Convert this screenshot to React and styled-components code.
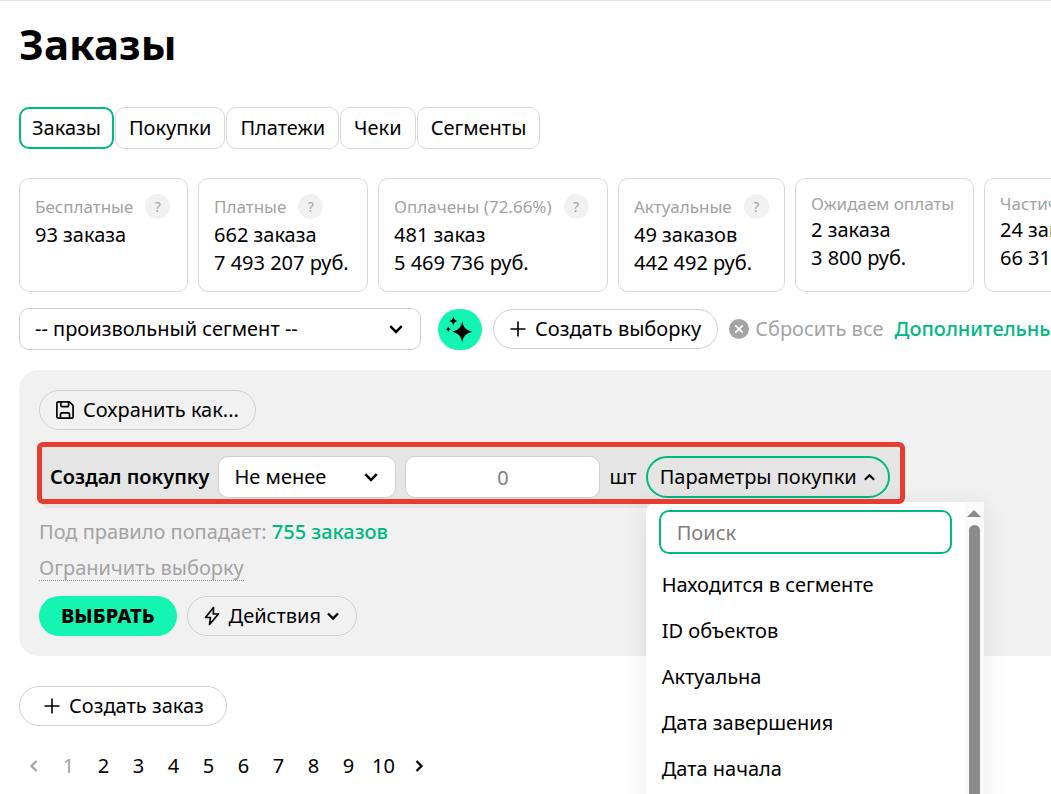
import styled, { createGlobalStyle } from "styled-components";

const tabs = ["Заказы", "Покупки", "Платежи", "Чеки", "Сегменты"];

const stats = [
  { label: "Бесплатные", help: true, lines: ["93 заказа"] },
  { label: "Платные", help: true, lines: ["662 заказа", "7 493 207 руб."] },
  { label: "Оплачены (72.66%)", help: true, lines: ["481 заказ", "5 469 736 руб."] },
  { label: "Актуальные", help: true, lines: ["49 заказов", "442 492 руб."] },
  { label: "Ожидаем оплаты", lines: ["2 заказа", "3 800 руб."] },
  { label: "Частично оплачены", lines: ["24 заказа", "66 316 руб."] },
];

const params = [
  "Находится в сегменте",
  "ID объектов",
  "Актуальна",
  "Дата завершения",
  "Дата начала",
];

const pages = [1, 2, 3, 4, 5, 6, 7, 8, 9, 10];

function Chevron({ direction = "down", size = 14, weight = 2 }) {
  const turn = { down: 0, left: 90, up: 180, right: 270 }[direction];
  return (
    <svg width={size} height={size} viewBox="0 0 14 14" fill="none" aria-hidden="true">
      <path
        d="M2 4.5 7 9.5l5-5"
        stroke="currentColor"
        strokeWidth={weight}
        transform={`rotate(${turn} 7 7)`}
      />
    </svg>
  );
}

function Plus() {
  return (
    <svg width="16" height="16" viewBox="0 0 16 16" fill="none" aria-hidden="true">
      <path d="M8 .5v15M.5 8h15" stroke="currentColor" strokeWidth="1.6" />
    </svg>
  );
}

function Sparkles() {
  return (
    <svg width="44" height="41" viewBox="0 0 44 41" fill="currentColor" aria-hidden="true">
      <path d="M24.2 12.300c1.200 6.300 3.700 8.800 10 10.500-6.300 1.700-8.800 4.200-10 10.500-1.200-6.300-3.700-8.800-10-10.500 6.300-1.700 8.800-4.200 10-10.500Z" />
      <path d="M15.300 7.500c.6 2.700 1.700 3.800 4.200 4.500-2.500.7-3.600 1.800-4.200 4.500-.6-2.700-1.700-3.800-4.200-4.500 2.500-.7 3.600-1.800 4.200-4.500Z" />
      <path d="M10.200 17.500c.4 1.600 1.100 2.300 2.600 2.700-1.500.4-2.200 1.100-2.600 2.700-.4-1.600-1.100-2.300-2.600-2.700 1.500-.4 2.200-1.100 2.600-2.700Z" />
    </svg>
  );
}

function Cross() {
  return (
    <svg width="20" height="20" viewBox="0 0 20 20" aria-hidden="true">
      <circle cx="10" cy="10" r="10" fill="#a3a3a3" />
      <path d="m6.300 6.300 7.400 7.400m0-7.400-7.400 7.400" stroke="#fff" strokeWidth="1.800" />
    </svg>
  );
}

function Floppy() {
  return (
    <svg width="18" height="18" viewBox="0 0 18 18" fill="none" aria-hidden="true">
      <g stroke="currentColor" strokeWidth="1.700" strokeLinejoin="round">
        <path d="M2.300.9h10.400a2 2 0 0 1 1.400.6l2.400 2.400a2 2 0 0 1 .6 1.400v10.400a1.400 1.400 0 0 1-1.400 1.400H2.300A1.400 1.400 0 0 1 .9 15.700V2.300A1.400 1.400 0 0 1 2.300.9Z" />
        <path d="M4.800.9v3.400a1.400 1.400 0 0 0 1.400 1.400h5a1.400 1.400 0 0 0 1.400-1.400V.9" />
        <path d="M4.500 17.100v-3.900a1.400 1.400 0 0 1 1.400-1.400h6.200a1.400 1.400 0 0 1 1.400 1.400v3.900" />
      </g>
    </svg>
  );
}

function Bolt() {
  return (
    <svg width="16" height="20" viewBox="0 0 16 20" fill="none" aria-hidden="true">
      <path
        d="M9.500 1.500 1.500 11.500h5l-1 7 9-10.500H9.300l.2-6.500Z"
        stroke="currentColor"
        strokeWidth="1.700"
        strokeLinejoin="round"
      />
    </svg>
  );
}

export default function App() {
  return (
    <Page>
      <GlobalStyle />
      <Title>Заказы</Title>

      <Tabs>
        {tabs.map((tab, i) => (
          <Tab key={tab} href="#" $active={i === 0}>
            {tab}
          </Tab>
        ))}
      </Tabs>

      <Stats>
        {stats.map((stat) => (
          <StatCard key={stat.label}>
            <StatLabel>
              {stat.label}
              {stat.help && <Help type="button">?</Help>}
            </StatLabel>
            {stat.lines.map((line) => (
              <StatValue key={line}>{line}</StatValue>
            ))}
          </StatCard>
        ))}
      </Stats>

      <SegmentBar>
        <SelectWrap $width={402}>
          <Select aria-label="Сегмент">
            <option>-- произвольный сегмент --</option>
          </Select>
          <Chevron size={16} weight={2.2} />
        </SelectWrap>
        <SparkButton type="button" aria-label="Подбор сегмента">
          <Sparkles />
        </SparkButton>
        <PillButton type="button">
          <Plus />
          Создать выборку
        </PillButton>
        <ResetButton type="button">
          <Cross />
          Сбросить все
        </ResetButton>
        <MoreLink href="#">Дополнительные</MoreLink>
      </SegmentBar>

      <FilterPanel>
        <PillButton type="button">
          <Floppy />
          Сохранить как...
        </PillButton>

        <RuleRow>
          <RuleName>Создал покупку</RuleName>
          <SelectWrap $width={178}>
            <Select aria-label="Условие">
              <option>Не менее</option>
            </Select>
            <Chevron size={16} weight={2.2} />
          </SelectWrap>
          <CountInput placeholder="0" aria-label="Количество" />
          <span>шт</span>
          <ParamsPicker>
            <ParamsButton type="button">
              Параметры покупки
              <Chevron direction="up" size={13} weight={2.2} />
            </ParamsButton>
            <Menu>
              <MenuBody>
                <SearchInput placeholder="Поиск" aria-label="Поиск" />
                {params.map((param) => (
                  <MenuItem key={param} type="button">
                    {param}
                  </MenuItem>
                ))}
              </MenuBody>
              <ScrollTrack>
                <ScrollArrow />
                <ScrollThumb />
              </ScrollTrack>
            </Menu>
          </ParamsPicker>
        </RuleRow>

        <Matches>
          Под правило попадает: <strong>755 заказов</strong>
        </Matches>
        <LimitLink href="#">Ограничить выборку</LimitLink>

        <PanelActions>
          <SubmitButton type="button">Выбрать</SubmitButton>
          <PillButton type="button">
            <Bolt />
            <DropLabel>
              Действия
              <Chevron size={14} weight={2.4} />
            </DropLabel>
          </PillButton>
        </PanelActions>
      </FilterPanel>

      <PillButton type="button" $wide>
        <Plus />
        Создать заказ
      </PillButton>

      <Pagination>
        <PageButton type="button" aria-label="Назад" disabled>
          <Chevron direction="left" weight={2.3} />
        </PageButton>
        {pages.map((page) => (
          <PageButton key={page} type="button" disabled={page === 1}>
            {page}
          </PageButton>
        ))}
        <PageButton type="button" aria-label="Вперёд">
          <Chevron direction="right" weight={2.3} />
        </PageButton>
      </Pagination>
    </Page>
  );
}

const GlobalStyle = createGlobalStyle`
  * {
    box-sizing: border-box;
  }
  body {
    margin: 0;
    background: #fff;
  }
  body, button, input, select {
    font-family: "Noto Sans", "Open Sans", sans-serif;
    font-size: 20px;
    line-height: 28px;
    color: #000;
  }
  button {
    cursor: pointer;
  }
  input::placeholder {
    color: #7d7d7d;
  }
  svg {
    flex: none;
  }
`;
const Page = styled.main`
  height: 100vh;
  overflow: hidden;
  padding: 15px 0 0 19px;
  border-top: 1px solid #e5e5e5;
`;
const Title = styled.h1`
  margin: 0 0 35px;
  font-size: 42px;
  line-height: 56px;
  font-weight: 700;
`;
const Tabs = styled.nav`
  display: flex;
  gap: 1px;
`;
const Tab = styled.a`
  height: 42px;
  padding: ${(props) => (props.$active ? "5px 11px" : "6px 13px")};
  border: ${(props) => (props.$active ? "2px solid #00b982" : "1px solid #d9d9d9")};
  border-radius: 10px;
  color: #000;
  text-decoration: none;
`;
const Stats = styled.section`
  display: grid;
  grid-template-columns: 169px 170px 230px 167px 179px max-content;
  gap: 10px;
  margin-top: 29px;
`;
const StatCard = styled.article`
  min-height: 114px;
  padding: 15px 15px 14px;
  border: 1px solid #d9d9d9;
  border-radius: 10px;
  white-space: nowrap;
`;
const StatLabel = styled.div`
  display: flex;
  align-items: center;
  padding-bottom: 2px;
  font-size: 17px;
  line-height: 20px;
  color: #a3a3a3;
`;
const Help = styled.button`
  width: 25px;
  height: 25px;
  margin-left: 12px;
  padding: 0;
  border: 0;
  border-radius: 50%;
  background: #f1f1f1;
  color: #a3a3a3;
  font-size: 14px;
  line-height: 25px;
`;
const StatValue = styled.div`
  line-height: 28px;
`;
const SegmentBar = styled.div`
  display: flex;
  align-items: center;
  gap: 11px;
  margin-top: 16px;
  white-space: nowrap;
`;
const SelectWrap = styled.label`
  position: relative;
  flex: none;
  width: ${(props) => props.$width}px;
  svg {
    position: absolute;
    top: 13px;
    right: 17px;
    pointer-events: none;
  }
`;
const Select = styled.select`
  appearance: none;
  display: block;
  width: 100%;
  height: 42px;
  padding: 0 15px;
  border: 1px solid #d0d0d0;
  border-radius: 10px;
  background: #fff;
`;
const SparkButton = styled.button`
  flex: none;
  height: 41px;
  margin-left: 6px;
  padding: 0;
  border: 0;
  border-radius: 22px;
  background: #14f5b4;
  svg {
    display: block;
  }
`;
const PillButton = styled.button`
  display: inline-flex;
  flex: none;
  align-items: center;
  gap: 9px;
  height: 40px;
  padding: 0 ${(props) => (props.$wide ? "22px 0 24px" : "16px")};
  border: 1px solid #d0d0d0;
  border-radius: 20px;
  background: transparent;
`;
const DropLabel = styled.span`
  display: flex;
  align-items: center;
  gap: 5px;
`;
const ResetButton = styled.button`
  display: flex;
  flex: none;
  align-items: center;
  gap: 6px;
  padding: 0;
  border: 0;
  background: none;
  color: #a3a3a3;
`;
const MoreLink = styled.a`
  color: #00b982;
  font-weight: 500;
  text-decoration: none;
`;
const FilterPanel = styled.section`
  margin: 20px 0 30px;
  padding: 20px;
  border-radius: 20px 0 0 20px;
  background: #f1f1f1;
`;
const RuleRow = styled.div`
  position: relative;
  display: flex;
  align-items: center;
  width: fit-content;
  gap: 9px;
  margin: 16px 0 10px;
  padding: 10px 10px 10px 11px;
  border-radius: 10px;
  background: #e5e5e5;
  white-space: nowrap;

  /* red frame that marks the rule */
  &::after {
    content: "";
    position: absolute;
    inset: -4px -5px 4px -2px;
    border: 5px solid #e63c32;
    border-radius: 6px;
    pointer-events: none;
    z-index: 2;
  }
`;
const RuleName = styled.span`
  font-weight: 600;
`;
const CountInput = styled.input`
  width: 195px;
  height: 42px;
  padding: 0 15px;
  border: 1px solid #d0d0d0;
  border-radius: 10px;
  text-align: center;
`;
const ParamsPicker = styled.div`
  position: relative;
`;
const ParamsButton = styled.button`
  display: flex;
  align-items: center;
  gap: 6px;
  height: 42px;
  padding: 0 12px;
  border: 2px solid #00b982;
  border-radius: 21px;
  background: transparent;
`;
const Menu = styled.div`
  position: absolute;
  top: 46px;
  left: 0;
  z-index: 1;
  display: flex;
  width: 338px;
  height: 400px;
  border-radius: 10px 0 0 10px;
  background: #fff;
  box-shadow: 0 4px 24px rgba(0, 30, 20, 0.1);
`;
const MenuBody = styled.div`
  flex: 1;
  padding: 8px 13px 0;
`;
const SearchInput = styled.input`
  display: block;
  width: 100%;
  height: 44px;
  margin-bottom: 8px;
  padding: 0 16px;
  border: 2px solid #00b982;
  border-radius: 10px;
  outline: none;
`;
const MenuItem = styled.button`
  display: block;
  width: 100%;
  height: 46px;
  padding: 0 3px;
  border: 0;
  background: none;
  text-align: left;
`;
const ScrollTrack = styled.div`
  display: flex;
  flex-direction: column;
  align-items: center;
  gap: 8px;
  width: 19px;
  padding-top: 8px;
  background: #fafafa;
`;
const ScrollArrow = styled.i`
  border: 7px solid transparent;
  border-top-width: 0;
  border-bottom-color: #8b8b8b;
`;
const ScrollThumb = styled.div`
  flex: 1;
  width: 11px;
  border-radius: 6px;
  background: #8b8b8b;
`;
const Matches = styled.p`
  margin: 0 0 10px;
  color: #a3a3a3;
  strong {
    color: #00b982;
    font-weight: 500;
  }
`;
const LimitLink = styled.a`
  display: block;
  width: fit-content;
  line-height: 24px;
  border-bottom: 1px dotted #8b8b8b;
  color: #a3a3a3;
  text-decoration: none;
`;
const PanelActions = styled.div`
  display: flex;
  gap: 10px;
  margin-top: 15px;
`;
const SubmitButton = styled.button`
  height: 40px;
  padding: 0 22px;
  border: 0;
  border-radius: 20px;
  background: #14f5b4;
  font-weight: 800;
  text-transform: uppercase;
`;
const Pagination = styled.nav`
  display: flex;
  margin: 20px 0 0 -3px;
`;
const PageButton = styled.button`
  display: flex;
  align-items: center;
  justify-content: center;
  width: 35px;
  height: 40px;
  padding: 0;
  border: 0;
  background: none;
  &:disabled {
    color: #a3a3a3;
  }
`;
